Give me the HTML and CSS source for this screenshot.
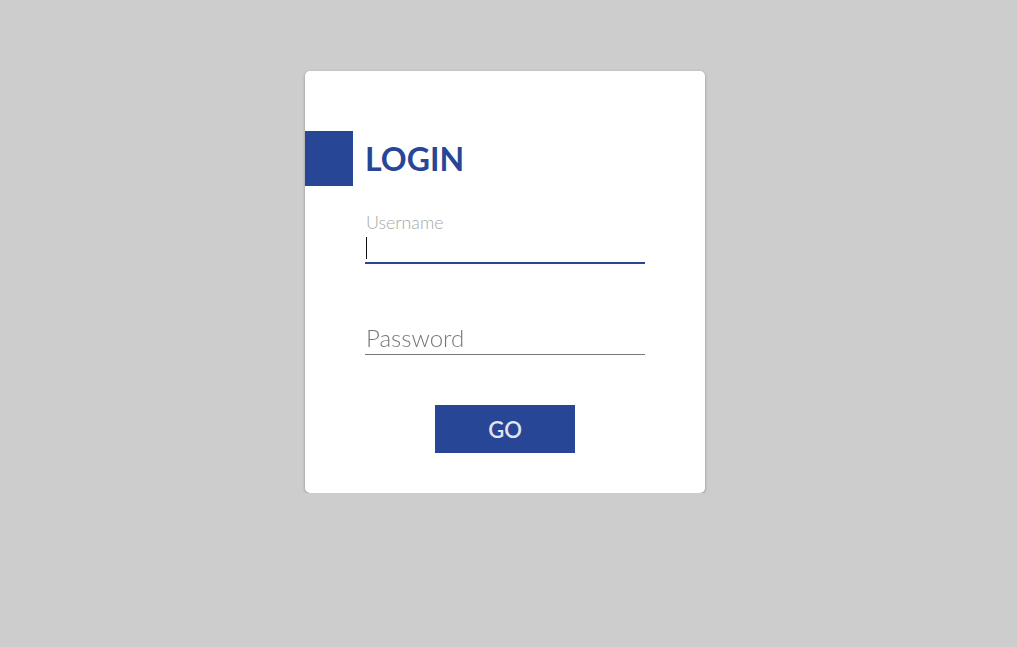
FILE: index.html
```html
<!DOCTYPE html>
<html>
<head>
	<title>Login</title>
	<link rel="stylesheet" href="styles.css">
</head>
<body>
	<div class="card">
		<div class="title">
			<span class="title_mark"></span>
			<h1>LOGIN</h1>
		</div>
		<form class="login_form" onsubmit="return false">
			<div class="field">
				<label for="username">Username</label>
				<div class="input_wrap">
					<input id="username" type="text" class="focused" autofocus>
					<span class="caret"></span>
				</div>
			</div>
			<div class="field">
				<label for="password"></label>
				<div class="input_wrap">
					<input id="password" type="password" placeholder="Password">
				</div>
			</div>
			<div class="actions">
				<button type="submit" class="btn_go">GO</button>
			</div>
		</form>
	</div>
</body>
</html>
```

FILE: styles.css
```css
body {
	margin: 0;
	padding: 71px 7px 0 0;   /*card sits a little left of center*/
	background-color: #cdcdcd;
	font-family: Lato, "Open Sans", sans-serif;
}

.card {
	width: 400px;
	margin: 0 auto;
	padding: 60px 0 40px 0;
	background-color: #fff;
	border-radius: 5px;
	box-shadow: 0 1px 3px rgba(0, 0, 0, 0.3);
}

.title {
	display: flex;
	align-items: center;
	height: 55px;
}
.title_mark {
	width: 48px;
	height: 55px;
	background-color: #284696;
}
.title h1 {
	margin: 0 0 0 12px;
	font-size: 32px;
	font-weight: 700;
	color: #284696;
}

.login_form {
	margin: 26px 60px 0 60px;
}

.field label {
	display: block;
	height: 20px;
	line-height: 20px;
	padding-left: 1px;
	font-size: 17.8px;
	font-weight: 300;
	color: #a8a8a8;
}
.input_wrap {
	position: relative;
}
.field input {
	display: block;
	box-sizing: border-box;
	width: 100%;
	height: 32px;
	margin: 0;
	padding: 2px 1px 0 1px;
	border: none;
	border-bottom: 1px solid #777;
	outline: none;
	font-family: inherit;
	font-size: 18px;
	font-weight: 300;
	color: #333;
	background: transparent;
	caret-color: transparent;
}
.field input.focused {
	border-bottom: 2px solid #284696;
}
.field input::placeholder {
	font-size: 24px;
	color: #777;
}
.field + .field {
	margin-top: 39px;
}

.caret {
	position: absolute;
	left: 1px;
	top: 5px;
	width: 1px;
	height: 22px;
	background-color: #111;
}

.actions {
	margin-top: 50px;
	text-align: center;
}
.btn_go {
	width: 140px;
	height: 48px;
	border: none;
	border-radius: 0;
	background-color: #284696;
	color: #e4e4ee;
	font-family: inherit;
	font-size: 22px;
	font-weight: 600;
	cursor: pointer;
}
```
